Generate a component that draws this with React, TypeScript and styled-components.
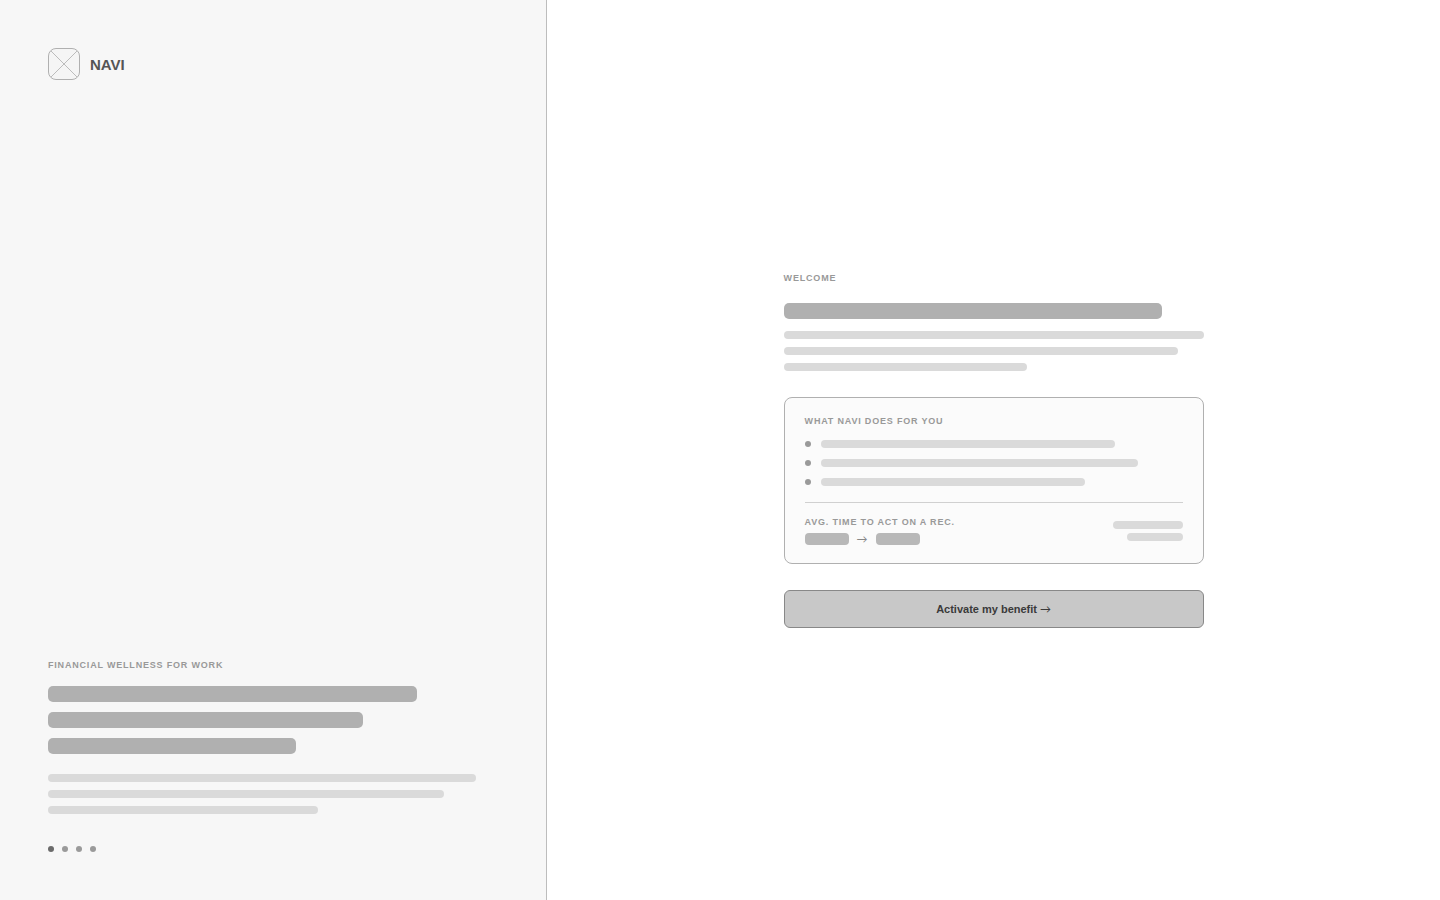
import React from "react";
import styled, { createGlobalStyle } from "styled-components";

const GlobalStyle = createGlobalStyle`
  *, *::before, *::after { box-sizing: border-box; }
  body {
    margin: 0;
    background: #ffffff;
    font-family: "Liberation Sans", Arial, sans-serif;
  }
`;

const Page = styled.div`
  display: flex;
  min-height: 100vh;
`;

const BrandPanel = styled.aside`
  flex: 0 0 38%;
  display: flex;
  flex-direction: column;
  justify-content: space-between;
  padding: 48px;
  background: #f7f7f7;
  border-right: 1px solid #bdbdbd;
`;

const Brand = styled.div`
  display: flex;
  align-items: center;
  gap: 10px;
`;

const LogoBox = styled.svg`
  display: block;
  width: 32px;
  height: 32px;
`;

const BrandName = styled.span`
  font-size: 15px;
  line-height: 19px;
  font-weight: 700;
  color: #555555;
`;

const Label = styled.p`
  margin: 0;
  font-size: 9px;
  line-height: 10px;
  font-weight: 700;
  letter-spacing: 0.09em;
  text-transform: uppercase;
  white-space: nowrap;
  color: #999999;
`;

const Stack = styled.div<{ $gap: number; $top?: number; $align?: string }>`
  display: flex;
  flex-direction: column;
  align-items: ${(p) => p.$align ?? "stretch"};
  gap: ${(p) => p.$gap}px;
  margin-top: ${(p) => p.$top ?? 0}px;
`;

const TitleBar = styled.div<{ $width: string }>`
  width: ${(p) => p.$width};
  height: 16px;
  border-radius: 5px;
  background: #b0b0b0;
`;

const TextBar = styled.div<{ $width: string }>`
  width: ${(p) => p.$width};
  height: 8px;
  border-radius: 4px;
  background: #dadada;
`;

const ValueBar = styled.div`
  width: 44px;
  height: 12px;
  border-radius: 4px;
  background: #b8b8b8;
`;

const Dot = styled.span<{ $active?: boolean }>`
  flex: none;
  width: 6px;
  height: 6px;
  border-radius: 50%;
  background: ${(p) => (p.$active ? "#6b6b6b" : "#9a9a9a")};
`;

const Dots = styled.div`
  display: flex;
  gap: 8px;
  margin-top: 32px;
`;

const Main = styled.main`
  flex: 1;
  display: flex;
  align-items: center;
  justify-content: center;
  padding: 48px;
`;

const Content = styled.div`
  width: 100%;
  max-width: 420px;
`;

const Card = styled.section`
  margin-top: 26px;
  padding: 18px 20px;
  border: 1px solid #b0b0b0;
  border-radius: 8px;
  background: #fbfbfb;
`;

const FeatureList = styled.ul`
  display: flex;
  flex-direction: column;
  gap: 11px;
  margin: 14px 0 16px;
  padding: 0;
  list-style: none;
`;

const Feature = styled.li`
  display: flex;
  align-items: center;
  gap: 10px;
`;

const CardFooter = styled.div`
  display: flex;
  align-items: center;
  justify-content: space-between;
  padding-top: 14px;
  border-top: 1px solid #d0d0d0;
`;

const Comparison = styled.div`
  display: flex;
  align-items: center;
  gap: 8px;
  height: 12px;
  margin-top: 6px;
  color: #888888;
`;

const Arrow = styled.span`
  font-family: Lato, "Liberation Sans", sans-serif;
  font-size: 11px;
  line-height: 12px;
  font-weight: 400;
`;

const PrimaryButton = styled.button`
  display: block;
  width: 100%;
  height: 38px;
  margin-top: 26px;
  padding: 0;
  border: 1px solid #888888;
  border-radius: 6px;
  background: #c8c8c8;
  color: #3a3a3a;
  font-family: inherit;
  font-size: 11px;
  line-height: 12px;
  font-weight: 700;
  cursor: pointer;
`;

const features = ["78%", "84%", "70%"];

export default function App() {
  return (
    <>
      <GlobalStyle />
      <Page>
        <BrandPanel>
          <Brand>
            <LogoBox viewBox="0 0 32 32" aria-hidden="true">
              <rect x="0.5" y="0.5" width="31" height="31" rx="7.5" fill="#f5f5f5" stroke="#b0b0b0" />
              <path d="M3 3 29 29M29 3 3 29" stroke="#bcbcbc" strokeWidth="1" fill="none" />
            </LogoBox>
            <BrandName>NAVI</BrandName>
          </Brand>
          <div>
            <Label>Financial wellness for work</Label>
            <Stack $gap={10} $top={16}>
              <TitleBar $width="82%" />
              <TitleBar $width="70%" />
              <TitleBar $width="55%" />
            </Stack>
            <Stack $gap={8} $top={20}>
              <TextBar $width="95%" />
              <TextBar $width="88%" />
              <TextBar $width="60%" />
            </Stack>
            <Dots>
              <Dot $active />
              <Dot />
              <Dot />
              <Dot />
            </Dots>
          </div>
        </BrandPanel>
        <Main>
          <Content>
            <Label>Welcome</Label>
            <Stack $gap={12} $top={20}>
              <TitleBar $width="90%" />
              <Stack $gap={8}>
                <TextBar $width="100%" />
                <TextBar $width="94%" />
                <TextBar $width="58%" />
              </Stack>
            </Stack>
            <Card>
              <Label>What Navi does for you</Label>
              <FeatureList>
                {features.map((width) => (
                  <Feature key={width}>
                    <Dot />
                    <TextBar $width={width} />
                  </Feature>
                ))}
              </FeatureList>
              <CardFooter>
                <div>
                  <Label>Avg. time to act on a rec.</Label>
                  <Comparison>
                    <ValueBar />
                    <Arrow>→</Arrow>
                    <ValueBar />
                  </Comparison>
                </div>
                <Stack $gap={4} $align="flex-end">
                  <TextBar $width="70px" />
                  <TextBar $width="56px" />
                </Stack>
              </CardFooter>
            </Card>
            <PrimaryButton type="button">
              Activate my benefit <Arrow>→</Arrow>
            </PrimaryButton>
          </Content>
        </Main>
      </Page>
    </>
  );
}
